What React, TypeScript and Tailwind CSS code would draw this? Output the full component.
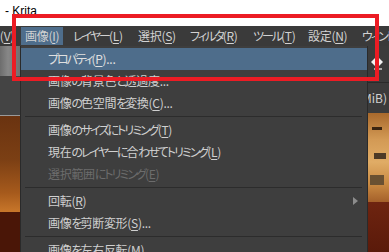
import React from 'react';

type MenuEntry =
  | { sep: true }
  | { sep?: false; label: string; key?: string; tail?: string; active?: boolean; disabled?: boolean; sub?: boolean };

const barItems = [
  { label: '画像', key: 'I', w: 'w-[48px]', active: true },
  { label: 'レイヤー', key: 'L', w: 'w-[65px]' },
  { label: '選択', key: 'S', w: 'w-[52px]' },
  { label: 'フィルタ', key: 'R', w: 'w-[63px]' },
  { label: 'ツール', key: 'T', w: 'w-[55px]' },
  { label: '設定', key: 'N', w: 'w-[54px]' },
  { label: 'ウィンドウ', key: 'W', w: 'w-[80px]' },
];

const entries: MenuEntry[] = [
  { label: 'プロパティ', key: 'P', tail: '...', active: true },
  { label: '画像の背景色と透過度...' },
  { label: '画像の色空間を変換', key: 'C', tail: '...' },
  { sep: true },
  { label: '画像のサイズにトリミング', key: 'T' },
  { label: '現在のレイヤーに合わせてトリミング', key: 'L' },
  { label: '選択範囲にトリミング', key: 'E', disabled: true },
  { sep: true },
  { label: '回転', key: 'R', sub: true },
  { label: '画像を剪断変形', key: 'S', tail: '...' },
  { sep: true },
  { label: '画像を左右反転', key: 'M' },
];

// kana in the original UI font are much narrower than in Noto, so tighten them
const Kana: React.FC<{ text: string }> = ({ text }) => (
  <>
    {text.split(/([\u3040-\u30ff]+)/).map((part, i) =>
      /[\u3040-\u30ff]/.test(part) ? (
        <span key={i} className="tracking-[-2px]">{part}</span>
      ) : (
        <React.Fragment key={i}>{part}</React.Fragment>
      )
    )}
  </>
);

const Label: React.FC<{ label: string; k?: string; tail?: string }> = ({ label, k, tail }) => (
  <span className="whitespace-nowrap tracking-[-0.3px] [font-feature-settings:'palt']">
    <Kana text={label} />
    {k && (
      <>
        (<u className="underline-offset-[2px]">{k}</u>)
      </>
    )}
    {tail}
  </span>
);

const App: React.FC = () => {
  return (
    <div className="relative w-[389px] h-[252px] overflow-hidden flex flex-col text-[12px] leading-[14px] font-['Noto_Sans_CJK_JP','Noto_Sans',sans-serif]">
      {/* title bar */}
      <div className="h-[26px] shrink-0 bg-white pt-[4px] pl-[5px] text-black font-['Liberation_Sans',sans-serif]">
        - Krita
      </div>

      {/* menubar */}
      <div className="h-[20px] shrink-0 bg-[#3a3a3a] flex items-center text-[#d2d2d2] overflow-hidden">
        <div className="w-[21px] shrink-0 h-[18px] flex justify-end items-center pr-[7px]">
          <Label label="表示" k="V" />
        </div>
        {barItems.map((it) => (
          <div key={it.key} className={`${it.w} shrink-0 h-[18px] flex items-center`}>
            <div className={`h-[18px] flex items-center px-[4px] ${it.active ? 'bg-[#4e6d8b]' : ''}`}>
              <Label label={it.label} k={it.key} />
            </div>
          </div>
        ))}
      </div>

      {/* body */}
      <div className="flex flex-1 min-h-0">
        {/* canvas strip on the left */}
        <div className="w-[20px] shrink-0 flex flex-col">
          <div className="h-[30px] bg-[linear-gradient(90deg,#6d6d6d,#878787_40%,#707070)]" />
          <div className="h-[39px] bg-[#444444]" />
          <div className="h-px bg-[#9a9a9a]" />
          <div className="h-[96px] bg-[linear-gradient(180deg,#6a3310_0%,#7b3f14_45%,#a65a1c_80%,#c8772a_100%)]" />
          <div className="flex-1 bg-[#4a1607]" />
        </div>

        {/* dropdown menu */}
        <div className="w-[348px] shrink-0 bg-[#3e3e3e] border-l border-r border-[#2a2a2a] pt-[2px] flex flex-col">
          {entries.map((e, i) =>
            e.sep ? (
              <div key={i} className="h-[5px] shrink-0 pt-[2px] pl-[4px] pr-[5px]">
                <div className="h-px bg-[#2c2c2c]" />
              </div>
            ) : (
              <div
                key={i}
                className={`h-[22px] shrink-0 flex items-center pl-[27px] pr-[5px] ${
                  e.active ? 'bg-[#4e6d8b] text-[#e0e0e0]' : e.disabled ? 'text-[#6c6c6c]' : 'text-[#d0d0d0]'
                }`}
              >
                <Label label={e.label} k={e.key} tail={e.tail} />
                {e.sub && (
                  <svg className="ml-auto mr-[4px]" width="5" height="8" viewBox="0 0 5 8">
                    <path d="M0 0 L5 4 L0 8 Z" fill="#8c8c8c" />
                  </svg>
                )}
              </div>
            )
          )}
        </div>

        {/* docker strip on the right */}
        <div className="flex-1 min-w-0 overflow-hidden flex flex-col bg-[#3b3b3b]">
          <div className="h-[30px] pt-[9px] pl-[2px]">
            <svg width="14" height="16" viewBox="0 0 14 16">
              <path d="M7 1 L13 7 L7 13 L1 7 Z" fill="#f2f2f2" />
              <path d="M4 14 L12 14" stroke="#cfcfcf" strokeWidth="1.5" />
            </svg>
          </div>
          <div className="h-[7px] border-b border-[#2a2a2a]" />
          <div className="h-[30px] flex items-center justify-end pr-[2px] text-[#cfcfcf] whitespace-nowrap">
            (MiB)
          </div>
          <div className="h-[89px] relative bg-[linear-gradient(180deg,#a8692c_0%,#d39a55_30%,#e0ac66_55%,#c98a42_80%,#a4602a_100%)]">
            <div className="absolute left-[4px] top-[14px] w-[10px] h-[3px] bg-[#3a2410]" />
            <div className="absolute left-[6px] top-[40px] w-[12px] h-[6px] bg-[#4d3a26]" />
            <div className="absolute left-[2px] top-[62px] w-[14px] h-[10px] bg-[#6a5132]" />
          </div>
          <div className="flex-1 bg-[linear-gradient(180deg,#6e2410,#5a1a0a)]" />
        </div>
      </div>

      {/* red annotation frame */}
      <div className="absolute left-[12px] top-[14px] w-[367px] h-[67px] border-[4px] border-[#ec1c24]" />
    </div>
  );
};

export default App;
